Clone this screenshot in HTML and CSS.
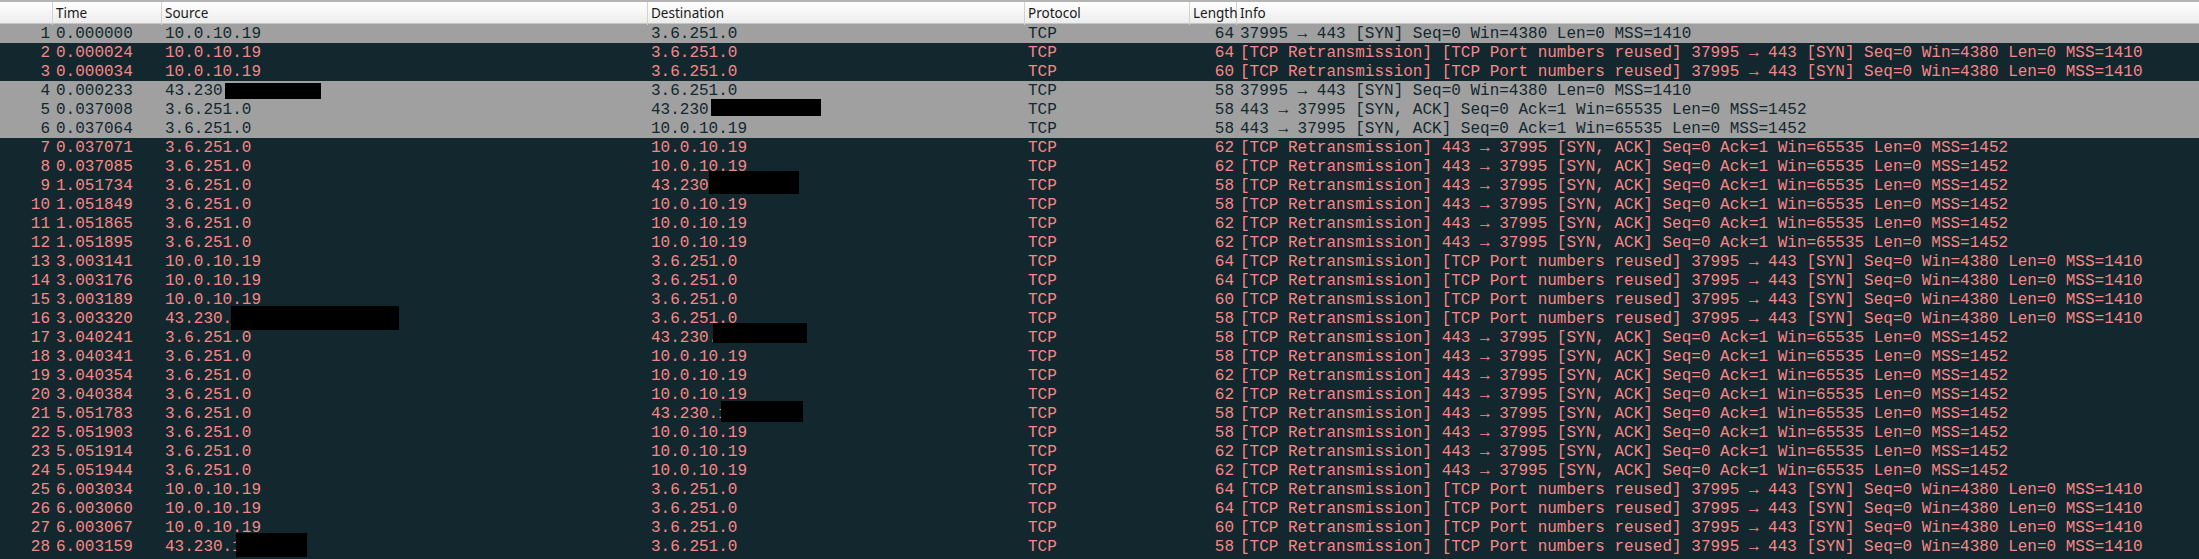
FILE: index.html
```html
<!DOCTYPE html>
<html lang="en">
<head>
<meta charset="utf-8">
<title>Packet list</title>
<link rel="stylesheet" href="styles.css">
</head>
<body>
<div class="packets">
<div class="head"><span class="h-no"></span><span>Time</span><span>Source</span><span>Destination</span><span>Protocol</span><span>Length</span><span class="h-info">Info</span></div>
<div class="row syn"><span class="num">1</span><span>0.000000</span><span>10.0.10.19</span><span>3.6.251.0</span><span>TCP</span><span class="num">64</span><span>37995 → 443 [SYN] Seq=0 Win=4380 Len=0 MSS=1410</span></div>
<div class="row bad"><span class="num">2</span><span>0.000024</span><span>10.0.10.19</span><span>3.6.251.0</span><span>TCP</span><span class="num">64</span><span>[TCP Retransmission] [TCP Port numbers reused] 37995 → 443 [SYN] Seq=0 Win=4380 Len=0 MSS=1410</span></div>
<div class="row bad"><span class="num">3</span><span>0.000034</span><span>10.0.10.19</span><span>3.6.251.0</span><span>TCP</span><span class="num">60</span><span>[TCP Retransmission] [TCP Port numbers reused] 37995 → 443 [SYN] Seq=0 Win=4380 Len=0 MSS=1410</span></div>
<div class="row syn"><span class="num">4</span><span>0.000233</span><span class="cell">43.230<i class="redact r4"></i></span><span>3.6.251.0</span><span>TCP</span><span class="num">58</span><span>37995 → 443 [SYN] Seq=0 Win=4380 Len=0 MSS=1410</span></div>
<div class="row syn"><span class="num">5</span><span>0.037008</span><span>3.6.251.0</span><span class="cell">43.230<i class="redact r5"></i></span><span>TCP</span><span class="num">58</span><span>443 → 37995 [SYN, ACK] Seq=0 Ack=1 Win=65535 Len=0 MSS=1452</span></div>
<div class="row syn"><span class="num">6</span><span>0.037064</span><span>3.6.251.0</span><span>10.0.10.19</span><span>TCP</span><span class="num">58</span><span>443 → 37995 [SYN, ACK] Seq=0 Ack=1 Win=65535 Len=0 MSS=1452</span></div>
<div class="row bad"><span class="num">7</span><span>0.037071</span><span>3.6.251.0</span><span>10.0.10.19</span><span>TCP</span><span class="num">62</span><span>[TCP Retransmission] 443 → 37995 [SYN, ACK] Seq=0 Ack=1 Win=65535 Len=0 MSS=1452</span></div>
<div class="row bad"><span class="num">8</span><span>0.037085</span><span>3.6.251.0</span><span>10.0.10.19</span><span>TCP</span><span class="num">62</span><span>[TCP Retransmission] 443 → 37995 [SYN, ACK] Seq=0 Ack=1 Win=65535 Len=0 MSS=1452</span></div>
<div class="row bad"><span class="num">9</span><span>1.051734</span><span>3.6.251.0</span><span class="cell">43.230<i class="redact r9"></i></span><span>TCP</span><span class="num">58</span><span>[TCP Retransmission] 443 → 37995 [SYN, ACK] Seq=0 Ack=1 Win=65535 Len=0 MSS=1452</span></div>
<div class="row bad"><span class="num">10</span><span>1.051849</span><span>3.6.251.0</span><span>10.0.10.19</span><span>TCP</span><span class="num">58</span><span>[TCP Retransmission] 443 → 37995 [SYN, ACK] Seq=0 Ack=1 Win=65535 Len=0 MSS=1452</span></div>
<div class="row bad"><span class="num">11</span><span>1.051865</span><span>3.6.251.0</span><span>10.0.10.19</span><span>TCP</span><span class="num">62</span><span>[TCP Retransmission] 443 → 37995 [SYN, ACK] Seq=0 Ack=1 Win=65535 Len=0 MSS=1452</span></div>
<div class="row bad"><span class="num">12</span><span>1.051895</span><span>3.6.251.0</span><span>10.0.10.19</span><span>TCP</span><span class="num">62</span><span>[TCP Retransmission] 443 → 37995 [SYN, ACK] Seq=0 Ack=1 Win=65535 Len=0 MSS=1452</span></div>
<div class="row bad"><span class="num">13</span><span>3.003141</span><span>10.0.10.19</span><span>3.6.251.0</span><span>TCP</span><span class="num">64</span><span>[TCP Retransmission] [TCP Port numbers reused] 37995 → 443 [SYN] Seq=0 Win=4380 Len=0 MSS=1410</span></div>
<div class="row bad"><span class="num">14</span><span>3.003176</span><span>10.0.10.19</span><span>3.6.251.0</span><span>TCP</span><span class="num">64</span><span>[TCP Retransmission] [TCP Port numbers reused] 37995 → 443 [SYN] Seq=0 Win=4380 Len=0 MSS=1410</span></div>
<div class="row bad"><span class="num">15</span><span>3.003189</span><span>10.0.10.19</span><span>3.6.251.0</span><span>TCP</span><span class="num">60</span><span>[TCP Retransmission] [TCP Port numbers reused] 37995 → 443 [SYN] Seq=0 Win=4380 Len=0 MSS=1410</span></div>
<div class="row bad"><span class="num">16</span><span>3.003320</span><span class="cell">43.230.<i class="redact r16"></i></span><span>3.6.251.0</span><span>TCP</span><span class="num">58</span><span>[TCP Retransmission] [TCP Port numbers reused] 37995 → 443 [SYN] Seq=0 Win=4380 Len=0 MSS=1410</span></div>
<div class="row bad"><span class="num">17</span><span>3.040241</span><span>3.6.251.0</span><span class="cell">43.230.<i class="redact r17"></i></span><span>TCP</span><span class="num">58</span><span>[TCP Retransmission] 443 → 37995 [SYN, ACK] Seq=0 Ack=1 Win=65535 Len=0 MSS=1452</span></div>
<div class="row bad"><span class="num">18</span><span>3.040341</span><span>3.6.251.0</span><span>10.0.10.19</span><span>TCP</span><span class="num">58</span><span>[TCP Retransmission] 443 → 37995 [SYN, ACK] Seq=0 Ack=1 Win=65535 Len=0 MSS=1452</span></div>
<div class="row bad"><span class="num">19</span><span>3.040354</span><span>3.6.251.0</span><span>10.0.10.19</span><span>TCP</span><span class="num">62</span><span>[TCP Retransmission] 443 → 37995 [SYN, ACK] Seq=0 Ack=1 Win=65535 Len=0 MSS=1452</span></div>
<div class="row bad"><span class="num">20</span><span>3.040384</span><span>3.6.251.0</span><span>10.0.10.19</span><span>TCP</span><span class="num">62</span><span>[TCP Retransmission] 443 → 37995 [SYN, ACK] Seq=0 Ack=1 Win=65535 Len=0 MSS=1452</span></div>
<div class="row bad"><span class="num">21</span><span>5.051783</span><span>3.6.251.0</span><span class="cell">43.230.1<i class="redact r21"></i></span><span>TCP</span><span class="num">58</span><span>[TCP Retransmission] 443 → 37995 [SYN, ACK] Seq=0 Ack=1 Win=65535 Len=0 MSS=1452</span></div>
<div class="row bad"><span class="num">22</span><span>5.051903</span><span>3.6.251.0</span><span>10.0.10.19</span><span>TCP</span><span class="num">58</span><span>[TCP Retransmission] 443 → 37995 [SYN, ACK] Seq=0 Ack=1 Win=65535 Len=0 MSS=1452</span></div>
<div class="row bad"><span class="num">23</span><span>5.051914</span><span>3.6.251.0</span><span>10.0.10.19</span><span>TCP</span><span class="num">62</span><span>[TCP Retransmission] 443 → 37995 [SYN, ACK] Seq=0 Ack=1 Win=65535 Len=0 MSS=1452</span></div>
<div class="row bad"><span class="num">24</span><span>5.051944</span><span>3.6.251.0</span><span>10.0.10.19</span><span>TCP</span><span class="num">62</span><span>[TCP Retransmission] 443 → 37995 [SYN, ACK] Seq=0 Ack=1 Win=65535 Len=0 MSS=1452</span></div>
<div class="row bad"><span class="num">25</span><span>6.003034</span><span>10.0.10.19</span><span>3.6.251.0</span><span>TCP</span><span class="num">64</span><span>[TCP Retransmission] [TCP Port numbers reused] 37995 → 443 [SYN] Seq=0 Win=4380 Len=0 MSS=1410</span></div>
<div class="row bad"><span class="num">26</span><span>6.003060</span><span>10.0.10.19</span><span>3.6.251.0</span><span>TCP</span><span class="num">64</span><span>[TCP Retransmission] [TCP Port numbers reused] 37995 → 443 [SYN] Seq=0 Win=4380 Len=0 MSS=1410</span></div>
<div class="row bad"><span class="num">27</span><span>6.003067</span><span>10.0.10.19</span><span>3.6.251.0</span><span>TCP</span><span class="num">60</span><span>[TCP Retransmission] [TCP Port numbers reused] 37995 → 443 [SYN] Seq=0 Win=4380 Len=0 MSS=1410</span></div>
<div class="row bad"><span class="num">28</span><span>6.003159</span><span class="cell">43.230.1<i class="redact r28"></i></span><span>3.6.251.0</span><span>TCP</span><span class="num">58</span><span>[TCP Retransmission] [TCP Port numbers reused] 37995 → 443 [SYN] Seq=0 Win=4380 Len=0 MSS=1410</span></div>
</div>
</body>
</html>
```
FILE: styles.css
```css
html, body {
  margin: 0;
  height: 100%;
  overflow: hidden;
  background: #12272e;
}

.packets {
  border-top: 2px solid #b4b4b4;
}

.head,
.row {
  display: grid;
  grid-template-columns: 53px 109px 486px 377px 165px 47px 1fr;
}

.head {
  height: 22px;
  box-sizing: border-box;
  background: linear-gradient(#ffffff, #ececec);
  border-bottom: 1px solid #c4c4c4;
  font: 13.5px/23px "Noto Sans", sans-serif;
  color: #1a1a1a;
}

.head span {
  padding-left: 3px;
  border-right: 1px solid #d2d2d2;
}

.head .h-info {
  border-right: 0;
}

.row {
  height: 19px;
  font: 16px/21px "Liberation Mono", monospace;
  white-space: pre;
}

.row span {
  padding-left: 3px;
}

.row .num {
  padding: 0 3px 0 0;
  text-align: right;
}

.syn {
  background: #a0a0a0;
  color: #12272e;
}

.bad {
  background: #12272e;
  color: #f78787;
}

.cell {
  position: relative;
}

.redact {
  position: absolute;
  background: #000;
}

.r4 { left: 63px; top: 2px; width: 96px; height: 16px; }
.r5 { left: 63px; top: -1px; width: 110px; height: 17px; }
.r9 { left: 61px; top: -5px; width: 90px; height: 23px; }
.r16 { left: 69px; top: -3px; width: 168px; height: 24px; }
.r17 { left: 65px; top: -5px; width: 94px; height: 20px; }
.r21 { left: 73px; top: -3px; width: 82px; height: 21px; }
.r28 { left: 74px; top: -4px; width: 71px; height: 24px; }
```
